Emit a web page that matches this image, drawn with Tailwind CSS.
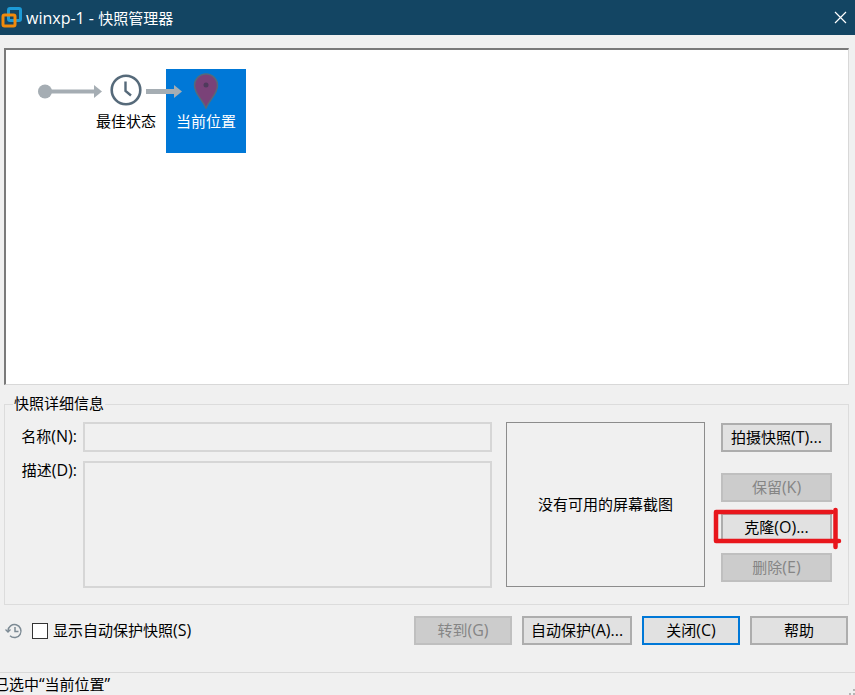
<!DOCTYPE html>
<html lang="zh-CN">
<head>
    <meta charset="UTF-8">
    <meta name="viewport" content="width=device-width, initial-scale=1.0">
    <title>winxp-1 - 快照管理器</title>
    <script src="https://cdn.jsdelivr.net/npm/@tailwindcss/browser@4"></script>
</head>
<body class="relative w-[855px] h-[695px] overflow-hidden bg-[#f0f0f0] text-[15px] leading-[20px] text-black font-['Open_Sans','Noto_Sans_CJK_SC',sans-serif]">

    <!-- Title bar -->
    <div class="h-[35px] bg-[#134563] flex items-center text-white">
        <svg class="ml-[1px] w-[21px] h-[21px]" viewBox="0 0 21 21" fill="none">
            <rect x="7.5" y="1.5" width="12" height="12" rx="1.5" stroke="#1c9ad6" stroke-width="3"/>
            <rect x="2" y="8" width="12" height="11" rx="1.5" stroke="#f08a0c" stroke-width="3"/>
        </svg>
        <span class="ml-[4px] text-[16px]">winxp-1 - <span class="text-[15px]">快照管理器</span></span>
        <svg class="ml-auto mr-[8px] w-[13px] h-[13px]" viewBox="0 0 13 13" stroke="white" stroke-width="1.2">
            <path d="M1 1 L12 12 M12 1 L1 12"/>
        </svg>
    </div>

    <!-- Snapshot tree -->
    <div class="mt-[13px] mx-[4px] w-[845px] h-[337px] bg-white border-2 border-t-[#7a7a7a] border-l-[#7a7a7a] border-r-[#d8d8d8] border-b-[#d8d8d8] border-r-1 border-b-1 flex items-start">
        <div class="ml-[32px] mt-[34px] flex items-center">
            <svg class="w-[65px] h-[16px]" viewBox="0 0 65 16">
                <circle cx="7" cy="7.5" r="7" fill="#a5adb3"/>
                <rect x="7" y="5.5" width="50" height="4" fill="#a5adb3"/>
                <path d="M56 1 L64 7.5 L56 14 Z" fill="#a5adb3"/>
            </svg>
        </div>
        <div class="ml-[-8px] w-[62px] mt-[24px] flex flex-col items-center">
            <svg class="w-[32px] h-[32px]" viewBox="0 0 32 32" fill="none" stroke="#566a7a">
                <circle cx="16" cy="16" r="14.3" stroke-width="2.6"/>
                <path d="M15.5 7.5 V17 L21 21.5" stroke-width="2.4"/>
            </svg>
            <span class="mt-[5px] whitespace-nowrap">最佳状态</span>
        </div>
        <svg class="relative z-10 ml-[-11px] mt-[34px] w-[37px] h-[16px]" viewBox="0 0 37 16">
            <rect x="0" y="5" width="29" height="5" fill="#a5adb3"/>
            <path d="M28 1 L36 7.5 L28 14 Z" fill="#a5adb3"/>
        </svg>
        <div class="ml-[-17px] mt-[19px] w-[80px] h-[84px] bg-[#0078d7] flex flex-col items-center text-white">
            <svg class="mt-[4px] w-[26px] h-[36px]" viewBox="0 0 26 36">
                <path d="M13 35 C9 26 1.5 21 1.5 12.5 A11.5 11.5 0 0 1 24.5 12.5 C24.5 21 17 26 13 35 Z" fill="#7a4278" stroke="#566a7a" stroke-width="1.5"/>
                <circle cx="13" cy="12" r="2.5" fill="#4f3a5c"/>
            </svg>
            <span class="mt-[2px] whitespace-nowrap">当前位置</span>
        </div>
    </div>

    <!-- Details group -->
    <fieldset class="mt-[11px] mx-[4px] w-[845px] h-[209px] border border-[#dcdcdc] pl-[9px] pr-[16px]">
        <legend class="relative top-[-1px] ml-[-1px] px-[1px] leading-[16px]">快照详细信息</legend>
        <div class="flex mt-[10px]">
            <div class="w-[69px] flex flex-col pr-[6px]">
                <label class="mt-[4px] h-[20px] text-right whitespace-nowrap">名称<span class="text-[16px]">(N):</span></label>
                <label class="mt-[14px] text-right whitespace-nowrap">描述<span class="text-[16px]">(D):</span></label>
            </div>
            <div class="w-[409px] flex flex-col gap-[9px]">
                <input class="h-[30px] bg-[#f0f0f0] border-2 border-[#d6d6d6]" disabled>
                <textarea class="h-[127px] bg-[#f0f0f0] border-2 border-[#d6d6d6] resize-none" disabled></textarea>
            </div>
            <div class="ml-[14px] w-[199px] h-[165px] pb-[2px] border border-[#8c8c8c] flex items-center justify-center">没有可用的屏幕截图</div>
            <div class="ml-[16px] w-[111px] flex flex-col pt-[1px]">
                <button class="h-[29px] pb-[2px] bg-[#e1e1e1] border-2 border-[#adadad]">拍摄快照<span class="text-[16px]">(T)...</span></button>
                <button disabled class="mt-[21px] h-[29px] pb-[2px] bg-[#cccccc] border-2 border-[#bfbfbf] text-[#858585]">保留<span class="text-[16px]">(K)</span></button>
                <button class="mt-[11px] h-[29px] pb-[2px] bg-[#e1e1e1] border-2 border-[#adadad]">克隆<span class="text-[16px]">(O)...</span></button>
                <button disabled class="mt-[11px] h-[29px] pb-[2px] bg-[#cccccc] border-2 border-[#bfbfbf] text-[#858585]">删除<span class="text-[16px]">(E)</span></button>
            </div>
        </div>
    </fieldset>

    <!-- Bottom row -->
    <div class="mt-[11px] h-[29px] flex items-center pl-[5px]">
        <svg class="w-[18px] h-[18px]" viewBox="0 0 18 18" fill="none" stroke="#7c8a94" stroke-width="1.5">
            <path d="M3 9 A6.5 6.5 0 1 1 5 13.8"/>
            <path d="M0.5 7.5 L3 10 L5.5 7.5" stroke-width="1.3"/>
            <path d="M10 5 V9.5 H13.5"/>
        </svg>
        <span class="ml-[9px] w-[16px] h-[16px] bg-white border border-[#333333]"></span>
        <span class="ml-[5px] pb-[2px]">显示自动保护快照<span class="text-[16px]">(S)</span></span>
        <div class="ml-auto mr-[7px] flex gap-[10px]">
            <button disabled class="w-[98px] h-[29px] pb-[2px] bg-[#cccccc] border-2 border-[#bfbfbf] text-[#858585]">转到<span class="text-[16px]">(G)</span></button>
            <button class="w-[110px] h-[29px] pb-[2px] bg-[#e1e1e1] border-2 border-[#adadad]">自动保护<span class="text-[16px]">(A)...</span></button>
            <button class="w-[98px] h-[29px] pb-[2px] bg-[#e1e1e1] border-2 border-[#0078d7]">关闭<span class="text-[16px]">(C)</span></button>
            <button class="w-[98px] h-[29px] pb-[2px] bg-[#e1e1e1] border-2 border-[#adadad]">帮助</button>
        </div>
    </div>

    <!-- Status bar -->
    <div class="mt-[27px] h-[23px] border-t border-[#d9d9d9] flex items-center">
        <span class="ml-[-6px] whitespace-nowrap">已选中<span class="text-[16px]">“</span>当前位置<span class="text-[16px]">”</span></span>
    </div>

    <!-- Size grip -->
    <svg class="absolute right-0 bottom-0 w-[6px] h-[6px]" viewBox="0 0 6 6" fill="#b5b5b5">
        <rect x="4" y="0" width="2" height="2"/>
        <rect x="0" y="4" width="2" height="2"/>
        <rect x="4" y="4" width="2" height="2"/>
    </svg>

    <!-- Red annotation over the clone button -->
    <svg class="absolute left-[710px] top-[505px] w-[135px] h-[46px]" viewBox="0 0 135 46" fill="none" stroke="#e8161c" stroke-linecap="round" stroke-linejoin="round">
        <path d="M122 7 H6 V36 H129" stroke-width="4.5"/>
        <path d="M125.5 5 V42" stroke-width="4.5"/>
    </svg>

</body>
</html>
